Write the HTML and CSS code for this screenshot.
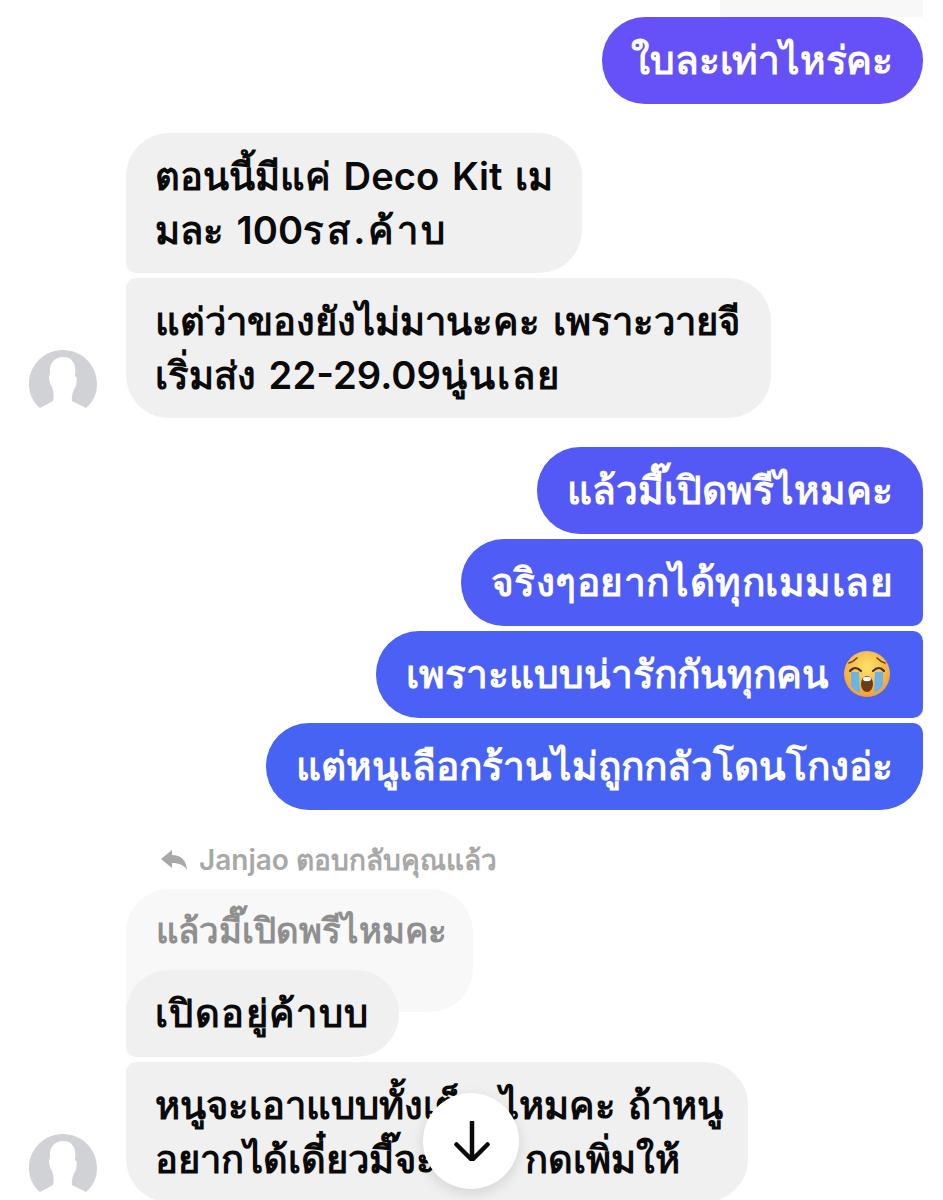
FILE: index.html
```html
<!DOCTYPE html>
<html lang="th">
<head>
    <meta charset="UTF-8">
    <title>Chat</title>
    <link rel="stylesheet" href="styles.css">
</head>
<body>
    <div class="chat">
        <div class="top-strip"></div>

        <div class="row row-me">
            <div class="bubble me me-1">ใบละเท่าไหร่คะ</div>
        </div>

        <div class="group group-them">
            <div class="row row-them">
                <div class="avatar-slot"></div>
                <div class="bubble them first-them w-deco">ตอนนี้มีแค่ Deco Kit เม<br>มละ 100<span class="wide-3">รส.ค้าบ</span></div>
            </div>
            <div class="row row-them">
                <div class="avatar-slot">
                    <svg class="avatar" viewBox="0 0 68 68"><path d="M11 58C4 52 0 44 0 34 0 15 15 0 34 0s34 15 34 34c0 10-4 18-11 24l-14-7c-1-5 1-10 4-15l1-8-2-2c2-12-3-19-12-19S20 14 21 22l-1 6 1 5c2 4 5 9 3 18z"/></svg>
                </div>
                <div class="bubble them last-them w-wai">แต่ว่าของยังไม่มานะคะ เพราะวายจี<br>เริ่มส่ง 22-29.09<span class="wide-2">นู่นเลย</span></div>
            </div>
        </div>

        <div class="group group-me">
            <div class="row row-me"><div class="bubble me me-2 first-me">แล้วมี๊เปิดพรีไหมคะ</div></div>
            <div class="row row-me"><div class="bubble me me-3 mid-me">จริงๆอยากได้ทุกเมมเลย</div></div>
            <div class="row row-me">
                <div class="bubble me me-4 mid-me">
                    <span>เพราะแบบน่ารักกันทุกคน</span>
                    <svg class="emoji" viewBox="0 0 46 46">
                        <defs>
                            <radialGradient id="face" cx="50%" cy="35%" r="70%">
                                <stop offset="0" stop-color="#fde26a"/>
                                <stop offset="1" stop-color="#f39a2e"/>
                            </radialGradient>
                        </defs>
                        <circle cx="23" cy="23" r="23" fill="url(#face)"/>
                        <path d="M7 21h8l1 21q-4-1-9-7zM31 21h8v14q-4 5-9 7z" fill="#6cb4e8"/>
                        <path d="M5 12q4-1 8-5M41 12q-4-1-8-5" fill="none" stroke="#6b4218" stroke-width="1.6" stroke-linecap="round"/>
                        <path d="M6 20q5-6 11 0M29 20q6-6 11 0" fill="none" stroke="#4d2f12" stroke-width="2.2" stroke-linecap="round"/>
                        <ellipse cx="23" cy="33" rx="6" ry="8" fill="#6b3c14"/>
                        <ellipse cx="23" cy="28" rx="4" ry="2.2" fill="#ffffff"/>
                    </svg>
                </div>
            </div>
            <div class="row row-me"><div class="bubble me me-5 last-me">แต่หนูเลือกร้านไม่ถูกกลัวโดนโกงอ่ะ</div></div>
        </div>

        <div class="reply-label">
            <svg class="reply-icon" viewBox="0 0 26 20"><path d="M0 9 11 0v5c9 0 14 5 15 15-3-5-8-7-15-7v5z"/></svg>
            <span>Janjao ตอบกลับคุณแล้ว</span>
        </div>

        <div class="row row-them">
            <div class="avatar-slot"></div>
            <div class="quoted">แล้วมี๊เปิดพรีไหมคะ</div>
        </div>
        <div class="row row-them row-over">
            <div class="avatar-slot"></div>
            <div class="bubble them answer">เปิดอยู่ค้าบบ</div>
        </div>
        <div class="row row-them row-next">
            <div class="avatar-slot">
                <svg class="avatar" viewBox="0 0 68 68"><path d="M11 58C4 52 0 44 0 34 0 15 15 0 34 0s34 15 34 34c0 10-4 18-11 24l-14-7c-1-5 1-10 4-15l1-8-2-2c2-12-3-19-12-19S20 14 21 22l-1 6 1 5c2 4 5 9 3 18z"/></svg>
            </div>
            <div class="bubble them last-them w-hnu">หนูจะเอาแบบทั้งเซ็ต ไหมคะ ถ้าหนู<br>อยากได้เดี๋ยวมี๊จะไป<span class="hidden-gap">กด</span>เพิ่มให้</div>
        </div>

        <button class="scroll-down">
            <svg viewBox="0 0 36 40"><path d="M18 1v38M2.500 23.500 18 39l15.500-15.500"/></svg>
        </button>
    </div>
</body>
</html>
```

FILE: styles.css
```css
body {
    margin: 0;
    background-color: #ffffff;
    font-family: Inter, "Noto Sans", "DejaVu Sans", sans-serif;
}
.chat {
    position: relative;
    height: 1200px;
    overflow: hidden;
    padding-top: 17px;
    box-sizing: border-box;
}
.top-strip {
    position: absolute;
    top: 0;
    left: 720px;
    width: 203px;
    height: 17px;
    background-color: #f8f8f9;
}
.row {
    display: flex;
}
.row-me {
    justify-content: flex-end;
    padding-right: 20px;
}
.row-them {
    align-items: flex-end;
    padding-left: 29px;
}
.avatar-slot {
    width: 68px;
    margin-right: 29px;
    flex-shrink: 0;
}
.avatar {
    display: block;
    width: 68px;
    height: 68px;
    fill: #d0d2d6;
}
.bubble {
    box-sizing: border-box;
    font-size: 38.8px;
    font-weight: 600;
    line-height: 54px;
    padding: 16px 30px 17px 29px;
    border-radius: 43px;
    white-space: nowrap;
}
.me {
    color: #ffffff;
    height: 87px;
    padding-left: 30px;
}
.them {
    background-color: #f0f0f0;
    color: #0a0a0a;
    font-size: 38.2px;
    word-spacing: 3px;
}
.wide-3 { letter-spacing: 3px; }
.wide-2 { letter-spacing: 2px; }
.me-1 { background-color: #6650f8; letter-spacing: -0.2px; padding-left: 29px; }
.me-2 { background-color: #5459f6; }
.me-3 { background-color: #4f5cf6; letter-spacing: 0.45px; }
.me-4 {
    background-color: #4b60f5;
    display: flex;
    align-items: center;
    gap: 15px;
    padding-right: 33px;
}
.me-5 { background-color: #4763f4; }
.first-me { border-bottom-right-radius: 10px; }
.mid-me { border-top-right-radius: 10px; border-bottom-right-radius: 10px; }
.last-me { border-top-right-radius: 10px; }
.first-them { border-bottom-left-radius: 10px; }
.last-them { border-top-left-radius: 10px; }
.w-deco { width: 456px; height: 140px; }
.w-wai { width: 645px; height: 140px; }
.w-hnu { width: 622px; height: 140px; }
.hidden-gap { margin-left: 45px; }
.group-them {
    display: flex;
    flex-direction: column;
    gap: 5px;
    margin-top: 29px;
}
.group-me {
    display: flex;
    flex-direction: column;
    gap: 5px;
    margin-top: 29px;
}
.emoji {
    display: block;
    width: 46px;
    height: 46px;
    flex-shrink: 0;
}
.reply-label {
    display: flex;
    align-items: center;
    gap: 12px;
    margin: 35px 0 14px 161px;
    height: 30px;
    color: #a8a8a8;
    font-size: 28px;
    font-weight: 600;
    white-space: nowrap;
}
.reply-icon {
    width: 26px;
    height: 20px;
    fill: #a8a8a8;
    flex-shrink: 0;
}
.quoted {
    box-sizing: border-box;
    width: 347px;
    height: 123px;
    padding: 16px 30px;
    background-color: #f8f8f8;
    border-radius: 43px;
    border-bottom-left-radius: 0;
    color: #8f8f8f;
    font-size: 34.800px;
    font-weight: 600;
    line-height: 50px;
    white-space: nowrap;
}
.row-over {
    margin-top: -42px;
}
.answer {
    width: 273px;
    height: 87px;
    border-bottom-left-radius: 10px;
    letter-spacing: 1.4px;
}
.row-next {
    margin-top: 5px;
}
.scroll-down {
    position: absolute;
    left: 423px;
    top: 1093px;
    width: 96px;
    height: 96px;
    padding: 0;
    border: none;
    border-radius: 50%;
    background-color: #ffffff;
    box-shadow: 0 4px 14px rgba(0, 0, 0, 0.12);
    display: flex;
    align-items: center;
    justify-content: center;
}
.scroll-down svg {
    width: 36px;
    height: 40px;
    margin-left: 2px;
    fill: none;
    stroke: #0a0a0a;
    stroke-width: 4.5;
    stroke-linecap: round;
    stroke-linejoin: round;
}
```
